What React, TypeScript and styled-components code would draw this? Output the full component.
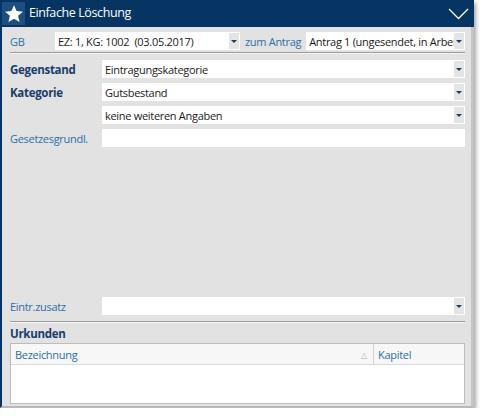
import React from "react";
import styled, { createGlobalStyle } from "styled-components";

const GlobalStyle = createGlobalStyle`
  html, body {
    margin: 0;
    padding: 0;
    background: #ffffff;
  }
  body {
    font-family: "Open Sans", "Liberation Sans", sans-serif;
    font-size: 11px;
    letter-spacing: -0.3px;
  }
`;

const NAVY = "#063463";
const LABEL = "#2b6fa8";
const BOLD_LABEL = "#173d6c";

const Window = styled.div`
  width: 474px;
  height: 408px;
  display: flex;
  flex-direction: column;
  box-sizing: border-box;
  box-shadow: 2px 3px 4px rgba(0, 0, 0, 0.35);
`;

const TitleBar = styled.div`
  height: 27px;
  flex: none;
  background: ${NAVY};
  display: flex;
  align-items: center;
  padding: 0 4px 0 2px;
  gap: 4px;
`;

const StarBox = styled.div`
  width: 23px;
  height: 23px;
  background: #1c4e80;
  display: flex;
  align-items: center;
  justify-content: center;
`;

const Title = styled.span`
  color: #ffffff;
  font-size: 12.5px;
  letter-spacing: -0.4px;
  flex: 1;
  line-height: 1;
`;

const Chevron = styled.svg`
  width: 21px;
  height: 13px;
  margin-right: 1px;
`;

const Body = styled.div`
  flex: 1;
  background: #e2e2e2;
  border-left: 2px solid ${NAVY};
  border-right: 3px solid #c4c4c4;
  border-bottom: 2px solid #b8b8b8;
  display: flex;
  flex-direction: column;
  padding: 5px 6px 2px 8px;
  min-height: 0;
`;

const TopRow = styled.div`
  display: flex;
  align-items: center;
  height: 18px;
`;

const Label = styled.span<{ $bold?: boolean; $width?: number }>`
  color: ${({ $bold }) => ($bold ? BOLD_LABEL : LABEL)};
  font-weight: ${({ $bold }) => ($bold ? 700 : 400)};
  font-size: ${({ $bold }) => ($bold ? "11.5px" : "11px")};
  width: ${({ $width }) => ($width ? `${$width}px` : "auto")};
  flex: none;
  white-space: nowrap;
`;

const AntragLabel = styled(Label)`
  margin: 0 5px 0 5px;
`;

const Separator = styled.div<{ $mt: number; $mb: number }>`
  height: 1px;
  background: #9c9c9c;
  border-bottom: 1px solid #f4f4f4;
  margin: ${({ $mt, $mb }) => `${$mt}px 0 ${$mb}px`};
`;

const Field = styled.div<{ $width?: number }>`
  height: 18px;
  background: #ffffff;
  display: flex;
  align-items: center;
  box-sizing: border-box;
  ${({ $width }) => ($width ? `width: ${$width}px; flex: none;` : "flex: 1;")}
  min-width: 0;
`;

const FieldText = styled.span`
  flex: 1;
  padding-left: 3px;
  color: #1a1a1a;
  white-space: pre;
  overflow: hidden;
  font-size: 11px;
`;

const DropBtn = styled.span`
  width: 10px;
  height: 16px;
  margin-right: 1px;
  background: #e4e4e4;
  display: flex;
  align-items: center;
  justify-content: center;
  flex: none;
  &::after {
    content: "";
    border-left: 3px solid transparent;
    border-right: 3px solid transparent;
    border-top: 3px solid ${BOLD_LABEL};
  }
`;

const FormRows = styled.div`
  display: flex;
  flex-direction: column;
  gap: 5px;
`;

const FormRow = styled.div`
  display: grid;
  grid-template-columns: 92px 1fr;
  align-items: center;
  height: 18px;
`;

const Spacer = styled.div`
  flex: 1;
`;

const SectionTitle = styled.div`
  color: ${BOLD_LABEL};
  font-weight: 700;
  font-size: 11.5px;
  line-height: 15px;
  margin-bottom: 2px;
`;

const Table = styled.div`
  height: 61px;
  border: 1px solid #bcbcbc;
  background: #ffffff;
  display: flex;
  flex-direction: column;
  box-sizing: border-box;
`;

const HeadRow = styled.div`
  height: 20px;
  display: grid;
  grid-template-columns: 363px 1fr;
  background: #f7f7f7;
  border-bottom: 1px solid #dcdcdc;
`;

const HeadCell = styled.div<{ $divider?: boolean }>`
  display: flex;
  align-items: center;
  padding-left: 4px;
  color: ${LABEL};
  font-size: 11px;
  border-right: ${({ $divider }) => ($divider ? "1px solid #d2d2d2" : "none")};
`;

const SortMark = styled.span`
  margin-left: auto;
  margin-right: 6px;
  color: #b0b0b0;
  font-size: 8px;
`;

const Select = ({ text, width }: { text: string; width?: number }) => (
  <Field $width={width}>
    <FieldText>{text}</FieldText>
    <DropBtn />
  </Field>
);

export default function App() {
  return (
    <>
      <GlobalStyle />
      <Window>
        <TitleBar>
          <StarBox>
            <svg width="20" height="20" viewBox="0 0 24 24">
              <path
                d="M12 1.5l3.1 7 7.6.7-5.8 5 1.8 7.5L12 17.8l-6.7 3.9 1.8-7.5-5.8-5 7.6-.7z"
                fill="#ffffff"
              />
            </svg>
          </StarBox>
          <Title>Einfache Löschung</Title>
          <Chevron viewBox="0 0 21 13">
            <polyline
              points="1,2 10.5,11.5 20,2"
              fill="none"
              stroke="#ffffff"
              strokeWidth="1.3"
            />
          </Chevron>
        </TitleBar>
        <Body>
          <TopRow>
            <Label $width={45}>GB</Label>
            <Select text="EZ: 1, KG: 1002  (03.05.2017)" width={185} />
            <AntragLabel>zum Antrag</AntragLabel>
            <Select text="Antrag 1 (ungesendet, in Arbeit)" />
          </TopRow>
          <Separator $mt={2} $mb={6} />
          <FormRows>
            <FormRow>
              <Label $bold>Gegenstand</Label>
              <Select text="Eintragungskategorie" />
            </FormRow>
            <FormRow>
              <Label $bold>Kategorie</Label>
              <Select text="Gutsbestand" />
            </FormRow>
            <FormRow>
              <span />
              <Select text="keine weiteren Angaben" />
            </FormRow>
            <FormRow>
              <Label>Gesetzesgrundl.</Label>
              <Field>
                <FieldText />
              </Field>
            </FormRow>
          </FormRows>
          <Spacer />
          <FormRow>
            <Label>Eintr.zusatz</Label>
            <Select text="" />
          </FormRow>
          <Separator $mt={6} $mb={3} />
          <SectionTitle>Urkunden</SectionTitle>
          <Table>
            <HeadRow>
              <HeadCell $divider>
                Bezeichnung
                <SortMark>△</SortMark>
              </HeadCell>
              <HeadCell>Kapitel</HeadCell>
            </HeadRow>
          </Table>
        </Body>
      </Window>
    </>
  );
}
